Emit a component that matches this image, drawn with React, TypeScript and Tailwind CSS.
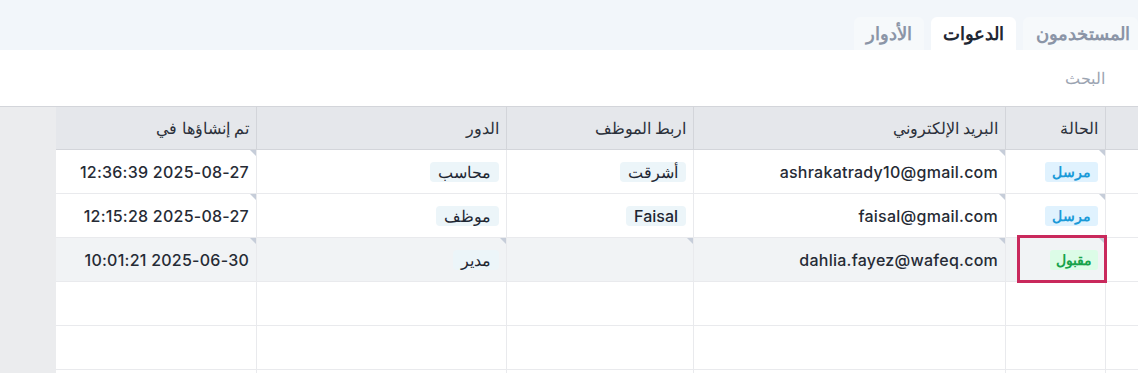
import React from "react";

type Row = {
  status: "sent" | "accepted";
  email: string;
  employee: string;
  role: string;
  created: string;
  flags: boolean[];
  highlight?: boolean;
};

const rows: Row[] = [
  {
    status: "sent",
    email: "ashrakatrady10@gmail.com",
    employee: "أشرقت",
    role: "محاسب",
    created: "2025-08-27 12:36:39",
    flags: [true, true, false, false, true],
  },
  {
    status: "sent",
    email: "faisal@gmail.com",
    employee: "Faisal",
    role: "موظف",
    created: "2025-08-27 12:15:28",
    flags: [true, true, false, false, true],
  },
  {
    status: "accepted",
    email: "dahlia.fayez@wafeq.com",
    employee: "",
    role: "مدير",
    created: "2025-06-30 10:01:21",
    flags: [true, true, true, true, true],
    highlight: true,
  },
];

const widths = ["w-[100px]", "w-[312px]", "w-[187px]", "w-[250px]", "w-[200px]"];
const headers = ["الحالة", "البريد الإلكتروني", "اربط الموظف", "الدور", "تم إنشاؤها في"];

function Corner() {
  return (
    <span className="absolute top-0 right-0 w-[6px] h-[6px] bg-[#c6cdd9] [clip-path:polygon(0_0,100%_0,100%_100%)]" />
  );
}

function Tag({ children }: { children: React.ReactNode }) {
  return (
    <span className="inline-flex items-center h-[20px] px-[8px] rounded-[4px] bg-[#ecf5f9] text-[#1f2733]">
      {children}
    </span>
  );
}

function StatusBadge({ status }: { status: Row["status"] }) {
  if (status === "accepted") {
    return (
      <span className="inline-flex items-center h-[20px] px-[6px] rounded-[3px] bg-[#dcfce7] text-[#16a34a] text-[14px] font-semibold">
        مقبول
      </span>
    );
  }
  return (
    <span className="inline-flex items-center h-[20px] px-[7px] rounded-[3px] bg-[#e0f2fe] text-[#1a9ad8] text-[14px] font-semibold">
      مرسل
    </span>
  );
}

export default function App() {
  return (
    <div
      dir="rtl"
      className="w-[1138px] h-[373px] overflow-hidden bg-white font-['Inter','Noto_Sans',sans-serif] text-[#262b35]"
    >
      {/* tabs */}
      <div className="h-[50px] bg-[#f2f6fa] flex items-end gap-[7px]">
        <div className="h-[33px] flex items-center pr-[8px] pl-[13px] rounded-t-[6px] bg-[#f6f9fb] text-[18px] font-bold text-[#8b95a7]">
          المستخدمون
        </div>
        <div className="h-[33px] flex items-center px-[12px] rounded-t-[6px] bg-white text-[18px] font-bold text-[#1f2733]">
          الدعوات
        </div>
        <div className="h-[33px] flex items-center px-[12px] rounded-t-[6px] bg-[#f6f9fb] text-[18px] font-bold text-[#8b95a7]">
          الأدوار
        </div>
      </div>

      {/* search */}
      <div className="h-[56px] flex items-center pr-[33px]">
        <input
          className="w-[300px] bg-transparent outline-none text-[16px] placeholder:text-[#9ba4b1]"
          placeholder="البحث"
        />
      </div>

      {/* table */}
      <div className="flex border-t border-[#d3d5da]">
        <div className="flex-1 flex flex-col">
          <div className="flex h-[43px] bg-[#e5e7eb] border-b border-[#d3d5da] text-[16px] font-medium text-[#2b303a]">
            <div className="w-[33px] border-l border-[#d3d5da]" />
            {headers.map((h, i) => (
              <div
                key={h}
                className={`${widths[i]} flex items-center pr-[7px] ${i < 4 ? "border-l border-[#d3d5da]" : ""}`}
              >
                {h}
              </div>
            ))}
          </div>

          {rows.map((r) => (
            <div
              key={r.email}
              className={`flex h-[44px] border-b border-[#e9eaed] text-[16px] font-medium ${r.highlight ? "bg-[#f1f3f5]" : "bg-white"}`}
            >
              <div className="w-[33px] border-l border-[#e9eaed] bg-white" />
              <div className={`${widths[0]} relative flex items-center pr-[7px] border-l border-[#e9eaed]`}>
                {r.flags[0] && <Corner />}
                <StatusBadge status={r.status} />
                {r.highlight && (
                  <span className="absolute top-[-3px] bottom-[-2px] left-[11px] right-[-2px] border-[3px] border-[#c9295c]" />
                )}
              </div>
              <div className={`${widths[1]} relative flex items-center pr-[7px] border-l border-[#e9eaed] tracking-[0.25px]`}>
                {r.flags[1] && <Corner />}
                {r.email}
              </div>
              <div className={`${widths[2]} relative flex items-center pr-[7px] border-l border-[#e9eaed]`}>
                {r.flags[2] && <Corner />}
                {r.employee && <Tag>{r.employee}</Tag>}
              </div>
              <div className={`${widths[3]} relative flex items-center pr-[7px] border-l border-[#e9eaed]`}>
                {r.flags[3] && <Corner />}
                <Tag>{r.role}</Tag>
              </div>
              <div className={`${widths[4]} relative flex items-center pr-[7px] tracking-[0.25px]`}>
                {r.flags[4] && <Corner />}
                {r.created}
              </div>
            </div>
          ))}

          {[0, 1, 2].map((i) => (
            <div key={i} className="flex h-[44px] border-b border-[#e9eaed]">
              <div className="w-[33px] border-l border-[#e9eaed]" />
              {widths.map((w, j) => (
                <div key={j} className={`${w} ${j < 4 ? "border-l border-[#e9eaed]" : ""}`} />
              ))}
            </div>
          ))}
        </div>
        <div className="w-[56px] bg-[#ebecee]" />
      </div>
    </div>
  );
}
